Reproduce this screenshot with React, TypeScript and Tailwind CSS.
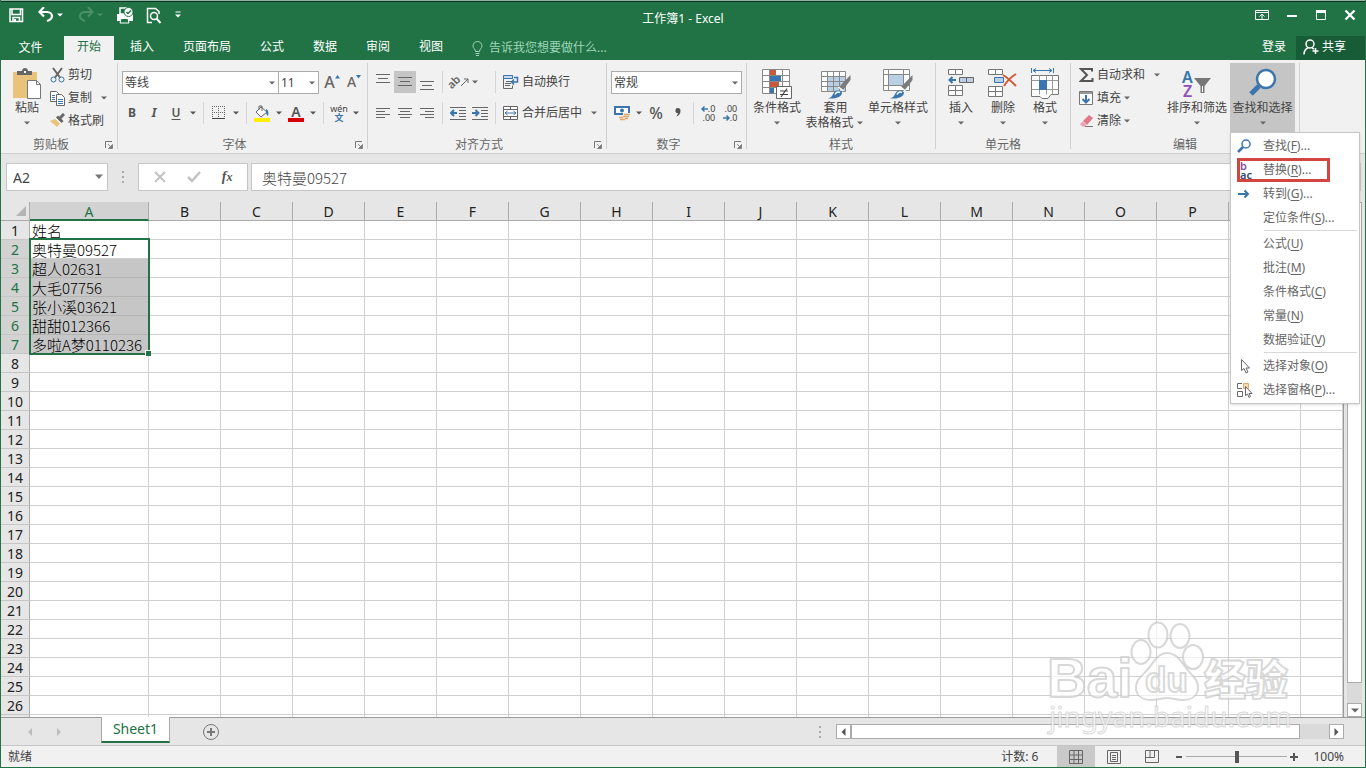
import type { ReactNode } from "react";
import clsx from "clsx";

const tabs = ["开始", "插入", "页面布局", "公式", "数据", "审阅", "视图"];
const columns = ["A", "B", "C", "D", "E", "F", "G", "H", "I", "J", "K", "L", "M", "N", "O", "P", "Q", "R"];
const names = ["姓名", "奥特曼09527", "超人02631", "大毛07756", "张小溪03621", "甜甜012366", "多啦A梦0110236"];
const rows = Array.from({ length: 26 }, (_, i) => i + 1);

const Caret = ({ className }: { className?: string }) => (
  <svg className={clsx("shrink-0", className)} width="12" height="6" viewBox="0 0 12 6">
    <path d="M3 1.500h6L6 4.500z" fill="currentColor" />
  </svg>
);

const Svg = ({ w = 16, h = 16, children }: { w?: number; h?: number; children: ReactNode }) => (
  <svg className="shrink-0" width={w} height={h} viewBox={`0 0 ${w} ${h}`} fill="none">
    {children}
  </svg>
);

const Sep = ({ className }: { className?: string }) => (
  <div className={clsx("h-[22px] w-px shrink-0 bg-[#d5d5d5]", className)} />
);

const Tool = ({ label, active, children }: { label: string; active?: boolean; children: ReactNode }) => (
  <button
    aria-label={label}
    className={clsx("flex h-[22px] w-[22px] shrink-0 items-center justify-center", active && "bg-[#c5c5c5]")}
  >
    {children}
  </button>
);

const Select = ({ label, value, className }: { label: string; value: string; className: string }) => (
  <div className={clsx("relative shrink-0", className)}>
    <select
      aria-label={label}
      className="h-[23px] w-full appearance-none border border-[#ababab] bg-white pl-[2px] text-xs leading-4 text-[#444]"
    >
      <option>{value}</option>
    </select>
    <Caret className="pointer-events-none absolute right-px top-[9px] text-[#666]" />
  </div>
);

const Group = ({
  label,
  className,
  launcher,
  children,
}: {
  label: string;
  className: string;
  launcher?: boolean;
  children: ReactNode;
}) => (
  <section className={clsx("relative shrink-0 border-r border-[#d0d0d0]", className)}>
    <div className="flex h-[73px]">{children}</div>
    <h2 className={clsx("pt-px text-center leading-4 text-[#666]", launcher && "pr-4")}>{label}</h2>
    {launcher && (
      <button aria-label={`${label}设置`} className="absolute bottom-0 right-1">
        <Svg w={8} h={8}>
          <path d="M.5 7V.5H7" stroke="#777" />
          <path d="M3 3l3 3M7.500 3.500v4h-4z" stroke="#777" fill="#777" strokeWidth=".8" />
        </Svg>
      </button>
    )}
  </section>
);

const Big = ({
  icon,
  label,
  second,
  className,
}: {
  icon: ReactNode;
  label: string;
  second?: string;
  className: string;
}) => (
  <button className={clsx("flex h-[69px] shrink-0 flex-col items-center pt-1", className)}>
    <span className="flex h-[33px] items-center">{icon}</span>
    <span className="whitespace-nowrap leading-4">{label}</span>
    <span className="flex h-3.5 items-center whitespace-nowrap leading-[14px]">
      {second}
      <Caret className="text-[#666]" />
    </span>
  </button>
);

const Small = ({ icon, label, caret }: { icon: ReactNode; label: string; caret?: string }) => (
  <button className="flex h-[23px] items-center gap-[3px] whitespace-nowrap">
    {icon}
    <span>{label}</span>
    {caret && <Caret className={clsx("text-[#666]", caret)} />}
  </button>
);

const Lines = ({ d }: { d: string }) => (
  <Svg w={14} h={16}>
    <path d={d} stroke="#666" />
  </Svg>
);

const Indent = ({ right }: { right?: boolean }) => (
  <Svg>
    <path d="M0 2.500h16M9 5.500h7M9 8.500h7M9 11.500h7M0 14.500h16" stroke="#666" />
    <path
      d={right ? "M0 8h6M3.500 5l3 3-3 3" : "M7 8H1.500M4 5L1 8l3 3"}
      stroke="#3a75ae"
      strokeWidth="2"
    />
  </Svg>
);

const Brush = () => (
  <>
    <path d="M29.500 7v5L22 22l-4-3z" fill="#7b7b7b" />
    <path d="M17.500 19l5 4" stroke="#fff" strokeWidth="1.500" />
    <path d="M7 30.500c4-1 4-3 6-6 2-3 7-2 8 0 0 4-5 6.500-14 6z" fill="#3a75ae" />
    <path d="M14 26.500c1-2.500 3-3 5-2" stroke="#fff" strokeWidth="1.500" />
  </>
);

const TitleBar = () => (
  <header className="bg-[#217346] text-white">
    <div className="h-px bg-[#8fb5a2]" />
    <div className="h-px bg-[#0e3320]" />
    <div className="relative flex h-[34px] items-center justify-between pb-2">
      <div className="flex items-center pl-[7px]">
        <button aria-label="保存" className="mr-3.5">
          <Svg>
            <path d="M2 2h12.500v12.500H2z" stroke="#fff" strokeWidth="1.500" />
            <path d="M4 2v5.500h8.500V2M5 14.500v-4h6.500v4" stroke="#fff" strokeWidth="1.500" />
            <path d="M6 12h2v3H6z" fill="#fff" />
          </Svg>
        </button>
        <button aria-label="撤消" className="flex items-center">
          <Svg>
            <path d="M2 5h7c3 0 5 2 5 4s-2 4-5 5" stroke="#fff" strokeWidth="2.200" />
            <path d="M6 0L1.500 5 6 9.500" stroke="#fff" strokeWidth="2.200" />
          </Svg>
          <Caret />
        </button>
        <button aria-label="恢复" className="ml-3 flex items-center text-[#4b9069]">
          <Svg>
            <path d="M14 5H7C4 5 2 7 2 9s2 4 5 5" stroke="currentColor" strokeWidth="2" />
            <path d="M10 0l4.500 5-4.500 4.500" stroke="currentColor" strokeWidth="2" />
          </Svg>
          <Caret />
        </button>
        <button aria-label="快速打印" className="ml-2.5">
          <Svg w={18} h={17}>
            <path d="M1 7h16v7H1z" fill="#fff" />
            <path d="M4 1h7v6H4z" fill="#217346" stroke="#fff" strokeWidth="1.500" />
            <path d="M5 11.500h7l1 4.500H4z" fill="#217346" stroke="#fff" />
            <circle cx="12.500" cy="5" r="4.500" fill="#fff" stroke="#217346" />
            <path d="M10.500 5l1.500 1.500L15 3.500" stroke="#217346" strokeWidth="1.500" />
          </Svg>
        </button>
        <button aria-label="打印预览" className="ml-3">
          <Svg w={16} h={17}>
            <path d="M6 15.500H1.500v-14h8l3.500 3V7" stroke="#fff" strokeWidth="1.500" />
            <circle cx="8" cy="9" r="3.500" stroke="#fff" strokeWidth="1.500" />
            <path d="M10.500 11.500l4 4.500" stroke="#fff" strokeWidth="2" />
          </Svg>
        </button>
        <button aria-label="自定义快速访问工具栏" className="ml-3">
          <Svg w={8} h={8}>
            <path d="M1.500 1h5" stroke="#fff" />
            <path d="M1 3.500h6l-3 3z" fill="#fff" />
          </Svg>
        </button>
      </div>
      <h1 className="pointer-events-none absolute inset-x-0 top-[9px] text-center leading-4">工作簿1 - Excel</h1>
      <div className="flex items-center gap-[17px] pr-[9px]">
        <button aria-label="功能区显示选项">
          <Svg w={14} h={12}>
            <path d="M.5 1.500h13v9H.5zM.5 3.500h13M7 10V5M4.500 7.500L7 5l2.500 2.500" stroke="#fff" />
          </Svg>
        </button>
        <button aria-label="最小化">
          <Svg w={12} h={12}>
            <path d="M1 7h10" stroke="#fff" strokeWidth="2" />
          </Svg>
        </button>
        <button aria-label="最大化">
          <Svg w={12} h={12}>
            <path d="M1.500 1.500h9v9h-9z" stroke="#fff" />
            <path d="M1 1h10v3H1z" fill="#fff" />
          </Svg>
        </button>
        <button aria-label="关闭">
          <Svg w={12} h={12}>
            <path d="M1.500 1.500l9 9M10.500 1.500l-9 9" stroke="#fff" strokeWidth="2.200" />
          </Svg>
        </button>
      </div>
    </div>
    <nav className="flex h-6 items-stretch">
      <button className="w-[63px] pr-1">文件</button>
      <div className="flex gap-[3px]">
        {tabs.map((tab, i) => (
          <button key={tab} className={clsx("px-[13px] pb-0.5", i === 0 && "bg-[#f1f1f1] text-[#217346]")}>
            {tab}
          </button>
        ))}
      </div>
      <label className="ml-4 flex flex-1 items-center gap-1.5 text-[#9fd5b7]">
        <Svg w={11} h={15}>
          <path
            d="M3.500 10.500C3.500 8 1 7.500 1 5a4.500 4.500 0 019 0c0 2.500-2.500 3-2.500 5.500zM3.500 12.500h4M4 14.500h3"
            stroke="#9fd5b7"
          />
        </Svg>
        <input
          aria-label="操作说明搜索"
          placeholder="告诉我您想要做什么..."
          className="w-40 bg-transparent leading-4 placeholder:text-[#9fd5b7]"
        />
      </label>
      <button className="mr-2.5 pb-0.5">登录</button>
      <button className="flex w-[69px] items-center gap-[3px] bg-[#185c37] pb-0.5 pl-[7px]">
        <Svg>
          <circle cx="7" cy="5" r="4" stroke="#fff" strokeWidth="1.500" />
          <path d="M1 15.500c0-4 2-6 4.500-7M9 9l2 1M12.500 9v6M9.500 12h6" stroke="#fff" strokeWidth="1.500" />
        </Svg>
        共享
      </button>
    </nav>
  </header>
);

const Clipboard = () => (
  <Group label="剪贴板" className="w-[117px]" launcher>
    <Big
      className="ml-1.5 w-10"
      label="粘贴"
      icon={
        <Svg w={28} h={32}>
          <path d="M0 4h24v26H0z" fill="#e9c27c" />
          <path d="M4 7V3h5c0-4 6-4 6 0h4v4z" fill="#666" />
          <path d="M11 3h2v2h-2z" fill="#fff" />
          <path d="M14.500 12.500h9l4 4v14h-13z" fill="#fff" stroke="#777" />
          <path d="M23.500 12.500v4h4" stroke="#777" />
        </Svg>
      }
    />
    <div className="ml-[3px]">
      <Small
        label="剪切"
        icon={
          <Svg w={15}>
            <path d="M3 1l7 9.500M12 1L5 10.500" stroke="#666" strokeWidth="2" />
            <circle cx="3.500" cy="12.500" r="2.500" stroke="#3a75ae" />
            <circle cx="11.500" cy="12.500" r="2.500" stroke="#3a75ae" />
          </Svg>
        }
      />
      <Small
        label="复制"
        caret="ml-[3px]"
        icon={
          <Svg w={15}>
            <path d="M.5 1.500h6l2 2v8h-8z" fill="#fff" stroke="#666" />
            <path d="M6.500 4.500h5l3 3v8h-8z" fill="#fff" stroke="#666" />
            <path d="M2 5.500h3M2 7.500h3M2 9.500h3M8 9.500h5M8 11.500h5M8 13.500h5" stroke="#3a75ae" />
          </Svg>
        }
      />
      <Small
        label="格式刷"
        icon={
          <Svg w={15}>
            <path d="M14 1l-4 4M7 3.500l5.500 5.500" stroke="#666" strokeWidth="3" />
            <path d="M0 8l5-2 5 4.500L7 14z" fill="#e9c27c" />
            <path d="M5.500 5l5 5" stroke="#fff" />
          </Svg>
        }
      />
    </div>
  </Group>
);

const FontGroup = () => (
  <Group label="字体" className="w-[250px]" launcher>
    <div className="flex flex-col gap-[9px] pt-2">
      <div className="flex h-[22px] pl-1">
        <Select label="字体" value="等线" className="w-[157px]" />
        <Select label="字号" value="11" className="-ml-px mr-0.5 w-[41px]" />
        <Tool label="增大字号">
          <span className="text-base leading-5 font-medium text-[#666]">A</span>
          <Svg w={5} h={14}>
            <path d="M0 3.500L2.500 0 5 3.500z" fill="#3a75ae" />
          </Svg>
        </Tool>
        <Tool label="减小字号">
          <span className="text-sm leading-5 font-medium text-[#666]">A</span>
          <Svg w={5} h={14}>
            <path d="M0 0h5L2.500 3.500z" fill="#3a75ae" />
          </Svg>
        </Tool>
      </div>
      <div className="flex h-[22px] items-center pl-[3px] text-[#555]">
        <Tool label="加粗">
          <b>B</b>
        </Tool>
        <Tool label="倾斜">
          <i className="font-bold">I</i>
        </Tool>
        <Tool label="下划线">
          <u className="font-semibold underline-offset-2">U</u>
        </Tool>
        <Caret />
        <Sep className="mx-1" />
        <Tool label="边框">
          <Svg w={14} h={14}>
            <path d="M.5 0v12M6.500 0v12M12.500 0v12M0 .5h13M0 6.500h13" stroke="#666" strokeDasharray="1 1" />
            <path d="M0 12.500h13" stroke="#444" />
          </Svg>
        </Tool>
        <Caret />
        <Sep className="mx-1" />
        <Tool label="填充颜色">
          <Svg h={17}>
            <path d="M2 7l5-5 6 5-6 5z" fill="#fff" stroke="#666" />
            <path d="M5 5V1h3v5" stroke="#666" />
            <path d="M12 4c2 1 3 3 2 7-1-1-2-2-2-4z" fill="#3a75ae" />
            <path d="M0 13h16v4H0z" fill="#ffee00" />
          </Svg>
        </Tool>
        <Caret />
        <Tool label="字体颜色">
          <span className="flex flex-col items-center">
            <span className="text-sm leading-[13px] font-semibold">A</span>
            <span className="h-1 w-4 bg-[#d60000]" />
          </span>
        </Tool>
        <Caret />
        <Sep className="mx-1" />
        <Tool label="拼音">
          <span className="flex flex-col items-center">
            <span className="text-[9px] leading-[9px] text-[#444]">wén</span>
            <span className="text-[9px] leading-[9px] font-bold text-[#3a75ae]">文</span>
          </span>
        </Tool>
        <Caret />
      </div>
    </div>
  </Group>
);

const AlignGroup = () => (
  <Group label="对齐方式" className="w-[239px]" launcher>
    <div className="flex flex-col gap-[9px] pt-2">
      <div className="flex h-[22px] items-center pl-1">
        <Tool label="顶端对齐">
          <Lines d="M0 .5h14M2 4.500h10M0 8.500h14" />
        </Tool>
        <Tool label="垂直居中" active>
          <Lines d="M0 3.500h14M2 7.500h10M0 11.500h14" />
        </Tool>
        <Tool label="底端对齐">
          <Lines d="M0 7.500h14M2 11.500h10M0 15.500h14" />
        </Tool>
        <Sep className="mx-1" />
        <Tool label="方向">
          <span className="-rotate-45 text-[11px] leading-3 font-semibold text-[#666]">ab</span>
          <Svg w={8} h={16}>
            <path d="M-2 14L7 5M3 5h4v4" stroke="#666" />
          </Svg>
        </Tool>
        <Caret className="mr-3.5 text-[#666]" />
        <Sep className="mr-[7px]" />
        <Small
          label="自动换行"
          icon={
            <Svg>
              <path d="M.5 1.500h9v3h-9zM.5 4.500v10h9v-3M2 9.500h6M2 11.500h5M3 7.500h8" stroke="#666" />
              <path d="M.5 1.500h9v3h-9z" fill="#c9dbec" stroke="#3a75ae" />
              <path d="M11 3.500h3.500V8H9M11 5.500L8.500 8l2.500 2.500" stroke="#3a75ae" strokeWidth="1.500" />
            </Svg>
          }
        />
      </div>
      <div className="flex h-[22px] items-center pl-1">
        <Tool label="左对齐">
          <Lines d="M0 3.500h14M0 6.500h9M0 9.500h14M0 12.500h9" />
        </Tool>
        <Tool label="居中">
          <Lines d="M0 3.500h14M2 6.500h10M0 9.500h14M2 12.500h10" />
        </Tool>
        <Tool label="右对齐">
          <Lines d="M0 3.500h14M5 6.500h9M0 9.500h14M5 12.500h9" />
        </Tool>
        <Sep className="mx-1" />
        <Tool label="减少缩进量">
          <Indent />
        </Tool>
        <Tool label="增加缩进量">
          <Indent right />
        </Tool>
        <Sep className="ml-1 mr-[7px]" />
        <Small
          label="合并后居中"
          caret="ml-[3px]"
          icon={
            <Svg>
              <path
                d="M.5 1.500h14v13H.5zM.5 4.500h14M.5 11.500h14M7.500 1.500v3M7.500 11.500v3"
                fill="#fff"
                stroke="#666"
              />
              <path d="M2 8h11M4.500 6L2 8l2.500 2M10.500 6L13 8l-2.500 2" stroke="#3a75ae" />
            </Svg>
          }
        />
      </div>
    </div>
  </Group>
);

const NumberGroup = () => (
  <Group label="数字" className="w-[140px]" launcher>
    <div className="flex flex-col gap-[9px] pl-1 pt-2">
      <div className="h-[22px]">
        <Select label="数字格式" value="常规" className="w-[131px]" />
      </div>
      <div className="flex h-[22px] items-center text-[#555]">
        <Tool label="会计数字格式">
          <Svg w={17}>
            <path d="M1 2h14v7H1z" fill="#fff" stroke="#3a75ae" strokeWidth="2" />
            <circle cx="8" cy="5.500" r="2" fill="#3a75ae" />
            <path d="M9 8h7v7H5v-3h4z" fill="#f1f1f1" />
            <path d="M10 9.500h6M9 11.500h6M5 12.500h4M6 14.500h5M11 13.500h3" stroke="#e2a868" strokeWidth="1.500" />
          </Svg>
        </Tool>
        <Caret />
        <Tool label="百分比样式">
          <span className="text-base leading-5 font-medium">%</span>
        </Tool>
        <Tool label="千位分隔样式">
          <Svg w={6} h={12}>
            <path
              d="M3 1a2.500 2.500 0 012.500 2.500C5.500 7 4 8.500 1 9.500c1.500-1.500 2-2.500 1.800-3.500A2.500 2.500 0 013 1z"
              fill="#555"
            />
          </Svg>
        </Tool>
        <Sep className="ml-1 mr-[3px]" />
        <Tool label="增加小数位数">
          <span className="flex flex-col items-end text-[9px] leading-[9px] text-[#444]">
            <span className="flex items-center">
              <Svg w={7} h={8}>
                <path d="M.5 4H7M3.500 1.500L1 4l2.500 2.500" stroke="#3a75ae" strokeWidth="1.500" />
              </Svg>
              .0
            </span>
            <span>.00</span>
          </span>
        </Tool>
        <Tool label="减少小数位数">
          <span className="flex flex-col items-end text-[9px] leading-[9px] text-[#444]">
            <span>.00</span>
            <span className="flex items-center">
              <Svg w={7} h={8}>
                <path d="M0 4h6M3.500 1.500L6 4 3.500 6.500" stroke="#3a75ae" strokeWidth="1.500" />
              </Svg>
              .0
            </span>
          </span>
        </Tool>
      </div>
    </div>
  </Group>
);

const StyleGroup = () => (
  <Group label="样式" className="w-[189px]">
    <Big
      className="ml-0.5 w-14"
      label="条件格式"
      icon={
        <Svg w={31} h={32}>
          <path d="M.5 1.500h27v24H.5z" fill="#fff" />
          <path d="M8 2h6v5H8zM8 14h9v5H8z" fill="#c9583c" />
          <path d="M8 8h11v5H8zM8 20h4v5H8z" fill="#3a75ae" />
          <path
            d="M.5 1.500h27v24H.5zM.5 7.500h27M.5 13.500h27M.5 19.500h27M7.500 1.500v24M20.500 1.500v24"
            stroke="#888"
          />
          <path d="M14.500 18.500h15v12h-15z" fill="#fff" stroke="#666" />
          <path d="M18 23h8M18 26.500h8M25 20.500l-6 8.500" stroke="#444" strokeWidth="1.200" />
        </Svg>
      }
    />
    <Big
      className="w-[61px]"
      label="套用"
      second="表格格式"
      icon={
        <Svg w={30} h={32}>
          <path d="M.5 3.500h24v20H.5z" fill="#fff" />
          <path d="M7 9h18v15H7z" fill="#b8cfe6" />
          <path
            d="M.5 3.500h24v20H.5zM.5 8.500h24M.5 13.500h24M.5 18.500h24M6.500 3.500v20M12.500 3.500v20M18.500 3.500v20"
            stroke="#888"
          />
          <Brush />
        </Svg>
      }
    />
    <Big
      className="w-16"
      label="单元格样式"
      icon={
        <Svg w={30} h={32}>
          <path d="M.5 1.500h26v21H.5z" fill="#fff" />
          <path d="M6 7h14v10H6z" fill="#b8cfe6" />
          <path d="M.5 1.500h26v21H.5zM.5 6.500h26M.5 17.500h26M5.500 1.500v21M20.500 1.500v21" stroke="#888" />
          <Brush />
        </Svg>
      }
    />
  </Group>
);

const CellGroup = () => (
  <Group label="单元格" className="w-[135px]">
    <Big
      className="ml-1 w-[42px]"
      label="插入"
      icon={
        <Svg w={27} h={32}>
          <path
            d="M.5 1.500h14v5H.5zM7.500 1.500v5M.5 17.500h14v10H.5zM7.500 17.500v10M.5 22.500h14"
            fill="#fff"
            stroke="#777"
          />
          <path d="M11.500 9.500h14v5h-14zM18.500 9.500v5" fill="#b8cfe6" stroke="#666" />
          <path d="M1 12h7M4.500 9L1.500 12l3 3" stroke="#3a75ae" strokeWidth="2" />
        </Svg>
      }
    />
    <Big
      className="w-[42px]"
      label="删除"
      icon={
        <Svg w={30} h={32}>
          <path
            d="M.5 1.500h14v5H.5zM7.500 1.500v5M.5 18.500h14v10H.5zM7.500 18.500v10M.5 23.500h14"
            fill="#fff"
            stroke="#777"
          />
          <path d="M6.500 9.500h9v5h-9z" fill="#b8cfe6" stroke="#3a75ae" />
          <path d="M15 7c5 3 9 7 13 11M28 6c-5 3-9 7-12 12" stroke="#cf5b38" strokeWidth="2" />
        </Svg>
      }
    />
    <Big
      className="w-[42px]"
      label="格式"
      icon={
        <Svg w={28} h={32}>
          <path d="M.5 0v5M22.500 0v5M2 2.500h19M5 .5l-3 2 3 2M18 .5l3 2-3 2" stroke="#3a75ae" />
          <path d="M.5 7.500h27v19H20l-3 4h-6l-2-2H.5z" fill="#fff" stroke="#777" />
          <path d="M.5 12.500h27M.5 21.500h27M8.500 7.500v19M15.500 7.500v19M21.500 7.500v19" stroke="#999" />
          <path d="M8 12h8v10H8z" fill="#3a75ae" />
        </Svg>
      }
    />
  </Group>
);

const menuItems = [
  { text: "查找", key: "F", more: true, icon: "find" },
  { text: "替换", key: "R", more: true, icon: "replace" },
  { text: "转到", key: "G", more: true, icon: "goto" },
  { text: "定位条件", key: "S", more: true },
  { text: "公式", key: "U", divider: true },
  { text: "批注", key: "M" },
  { text: "条件格式", key: "C" },
  { text: "常量", key: "N" },
  { text: "数据验证", key: "V" },
  { text: "选择对象", key: "O", divider: true, icon: "pointer" },
  { text: "选择窗格", key: "P", more: true, icon: "pane" },
];

const menuIcons: Record<string, ReactNode> = {
  find: (
    <Svg>
      <circle cx="10" cy="6" r="4" stroke="#3a75ae" strokeWidth="1.500" />
      <path d="M7 9l-5 5" stroke="#3a75ae" strokeWidth="2.500" />
    </Svg>
  ),
  replace: (
    <span className="flex flex-col items-start pl-1 text-[11px] leading-[9px] font-semibold">
      <span className="text-[#8150a5]">b</span>
      <span className="text-[#2d4a78]">ac</span>
    </span>
  ),
  goto: (
    <Svg>
      <path d="M2 8h10M8.500 4.500L12 8l-3.500 3.500" stroke="#3a75ae" strokeWidth="2" />
    </Svg>
  ),
  pointer: (
    <Svg>
      <path d="M5.500 1.500v11l2.500-2 2 4.500 2-1-2-4h3.500z" fill="#fff" stroke="#666" />
    </Svg>
  ),
  pane: (
    <Svg w={17}>
      <path d="M6 1.500H1.500v5H6M1.500 9.500h5v5h-5z" stroke="#666" />
      <path d="M7.500 1.500h5v5h-5z" fill="#f3d9ae" stroke="#e2a868" />
      <path d="M9.500 4.500v9l2-1.500 1.500 3.500 1.500-1-1.500-3h3z" fill="#fff" stroke="#666" />
    </Svg>
  ),
};

const FindMenu = () => (
  <ul className="absolute left-0 top-[69px] z-20 w-[130px] border border-[#c6c6c6] bg-white pb-px pt-px text-[#666] shadow-sm">
    {menuItems.map((item) => (
      <li key={item.key} className="relative">
        {item.divider && <div className="mb-px ml-[33px] mr-0.5 h-px bg-[#d8d8d8]" />}
        <button className="flex h-6 w-full items-center gap-1.5 whitespace-nowrap">
          <span className="flex w-[26px] justify-center">{item.icon && menuIcons[item.icon]}</span>
          <span>
            {item.text}(<u className="underline-offset-2">{item.key}</u>){item.more && "..."}
          </span>
        </button>
        {item.key === "R" && (
          <div className="pointer-events-none absolute left-1.5 top-0 h-6 w-[93px] border-3 border-[#d3453f]" />
        )}
      </li>
    ))}
  </ul>
);

const EditGroup = () => (
  <Group label="编辑" className="w-[229px]">
    <div className="ml-2 w-[85px]">
      <Small
        label="自动求和"
        caret="ml-[3px]"
        icon={
          <Svg w={15}>
            <path d="M13 4.500V2H2l6 6-6 6h11.500v-3" stroke="#555" strokeWidth="2" />
          </Svg>
        }
      />
      <Small
        label="填充"
        caret="-ml-[3px]"
        icon={
          <Svg w={15}>
            <path d="M.5 1.500h13v13H.5z" fill="#fff" stroke="#777" />
            <path d="M1 2h12v2H1z" fill="#999" />
            <path d="M7 5v7M3.500 9L7 12.500 10.500 9" stroke="#3a75ae" strokeWidth="2" />
          </Svg>
        }
      />
      <Small
        label="清除"
        caret="-ml-[3px]"
        icon={
          <Svg w={15}>
            <path d="M4 8l6-6 4 3-6 7z" fill="#e0788c" />
            <path d="M3.500 8.500L7.500 12l-1.500 1.500H3L1 11z" fill="#e9a3b0" />
            <path d="M6 13.500h8" stroke="#777" />
          </Svg>
        }
      />
    </div>
    <Big
      className="w-[66px]"
      label="排序和筛选"
      icon={
        <span className="flex items-center">
          <span className="flex flex-col items-center text-base leading-[14px] font-semibold">
            <span className="text-[#3a75ae]">A</span>
            <span className="text-[#8f50b5]">Z</span>
          </span>
          <Svg w={19} h={24}>
            <path d="M1 6h17l-6.500 8v7h-4v-7z" fill="#777" />
            <path d="M9.500 14v6" stroke="#fff" />
          </Svg>
        </span>
      }
    />
    <div className="relative">
      <Big
        className="w-[65px] bg-[#c5c5c5]"
        label="查找和选择"
        icon={
          <Svg w={30} h={32}>
            <path d="M11 18l-8 8" stroke="#3a75ae" strokeWidth="5" />
            <circle cx="18" cy="11" r="9" fill="#fff" stroke="#3a75ae" strokeWidth="2.500" />
          </Svg>
        }
      />
      <FindMenu />
    </div>
  </Group>
);

const FormulaBar = () => (
  <div className="flex h-12 items-center pb-0.5 pl-[5px] pr-1 text-sm text-[#444]">
    <div className="relative w-[102px]">
      <input
        aria-label="名称框"
        defaultValue="A2"
        className="h-7 w-full border border-[#c6c6c6] bg-white pl-1.5 leading-5"
      />
      <svg className="absolute right-1 top-[11px]" width="10" height="6" viewBox="0 0 10 6">
        <path d="M1 .5h8l-4 4.500z" fill="#777" />
      </svg>
    </div>
    <div className="mx-[13px]">
      <Svg w={4} h={14}>
        <path d="M1 1h2v2H1zM1 6h2v2H1zM1 11h2v2H1z" fill="#aaa" />
      </Svg>
    </div>
    <div className="flex h-7 w-[110px] items-center justify-around border border-[#c6c6c6] bg-white px-1">
      <button aria-label="取消">
        <Svg w={12} h={12}>
          <path d="M1 1l10 10M11 1L1 11" stroke="#c2c2c2" strokeWidth="2" />
        </Svg>
      </button>
      <button aria-label="输入">
        <Svg w={14} h={12}>
          <path d="M1 6l4 4 8-9" stroke="#c2c2c2" strokeWidth="2.500" />
        </Svg>
      </button>
      <button
        aria-label="插入函数"
        className="font-['Liberation_Serif',serif] text-sm leading-5 font-bold text-[#555] italic"
      >
        f<span className="text-xs">x</span>
      </button>
    </div>
    <input
      aria-label="编辑栏"
      defaultValue="奥特曼09527"
      className="ml-[3px] h-7 min-w-0 flex-1 border border-[#c6c6c6] bg-white pl-2.5 font-['Noto_Sans_CJK_SC',sans-serif] text-[15px] leading-5 font-light"
    />
  </div>
);

const Sheet = () => (
  <div className="flex flex-1">
    <div className="min-w-0 flex-1 overflow-hidden border-r border-[#9b9b9b]">
      <table className="w-full table-fixed border-separate border-spacing-0 text-sm leading-4 text-[#222]">
        <thead>
          <tr className="h-[19px] bg-[#e6e6e6]">
            <th className="w-[29px] border-b border-r border-[#ababab] p-0" aria-label="全选">
              <svg className="ml-auto mr-0.5" width="12" height="12" viewBox="0 0 12 12">
                <path d="M11 1v10H1z" fill="#b4b4b4" />
              </svg>
            </th>
            {columns.map((c, i) => (
              <th
                key={c}
                aria-label={c}
                className={clsx(
                  "border-r border-r-[#ababab] p-0 pt-0.5 font-normal",
                  i === 0 && "w-[119px] border-b-2 border-b-[#217346] bg-[#d2d2d2] leading-[15px] text-[#217346]",
                  i > 0 && "border-b border-b-[#ababab]",
                  i > 0 && i < 17 && "w-[72px]"
                )}
              >
                {i < 16 && c}
              </th>
            ))}
          </tr>
        </thead>
        <tbody>
          {rows.map((r) => (
            <tr key={r} className="h-[19px]">
              <th
                className={clsx(
                  "border-b border-r border-b-[#c6c6c6] p-0 pt-0.5 font-normal",
                  r > 1 && r < 8
                    ? "border-r-[#217346] bg-[#d2d2d2] text-[#217346]"
                    : "border-r-[#ababab] bg-[#e6e6e6]"
                )}
              >
                {r}
              </th>
              {columns.map((c, i) => (
                <td
                  key={c}
                  className={clsx(
                    "border-b border-r p-0",
                    i === 0 &&
                      "relative pl-[2px] pt-0.5 font-['Noto_Sans_CJK_SC',sans-serif] text-[15px] leading-4 font-light whitespace-nowrap text-black",
                    i === 0 && r > 2 && r < 8 ? "border-[#b4b4b4] bg-[#c6c6c6]" : "border-[#d0d0d0] bg-white"
                  )}
                >
                  {i === 0 && names[r - 1]}
                  {i === 0 && r === 2 && (
                    <div className="pointer-events-none absolute -left-px -top-0.5 z-10 h-[117px] w-[121px] border-2 border-[#217346]">
                      <div className="absolute -bottom-[3px] -right-[3px] h-1.5 w-1.5 border-l border-t border-white bg-[#217346]" />
                    </div>
                  )}
                </td>
              ))}
            </tr>
          ))}
          <tr className="h-0.5">
            <th className="border-r border-[#ababab] p-0" />
            {columns.map((c) => (
              <td key={c} className="border-r border-[#d0d0d0] bg-white p-0" />
            ))}
          </tr>
        </tbody>
      </table>
    </div>
    <div className="flex w-[21px] flex-col px-[3px]">
      <div className="flex-1 border border-[#ababab] bg-white" />
      <div className="h-5 bg-[#dadada]" />
      <button
        aria-label="向下滚动"
        className="flex h-[14px] items-center justify-center border border-[#ababab] bg-white"
      >
        <svg width="8" height="5" viewBox="0 0 8 5">
          <path d="M0 .5h8L4 4.500z" fill="#666" />
        </svg>
      </button>
    </div>
  </div>
);

const SheetTabs = () => (
  <div className="flex h-7 border-t border-[#9b9b9b] text-[#bcbcbc]">
    <button aria-label="上一个工作表" className="ml-[25px]">
      <svg width="8" height="8" viewBox="0 0 8 8">
        <path d="M6 0v8L2 4z" fill="currentColor" />
      </svg>
    </button>
    <button aria-label="下一个工作表" className="ml-[21px]">
      <svg width="8" height="8" viewBox="0 0 8 8">
        <path d="M2 0v8l4-4z" fill="currentColor" />
      </svg>
    </button>
    <button className="-mt-px ml-[38px] h-[26px] w-[69px] border-x border-b-2 border-x-[#ababab] border-b-[#217346] bg-white text-sm leading-5 text-[#217346]">
      Sheet1
    </button>
    <button aria-label="新工作表" className="ml-8">
      <Svg w={18} h={18}>
        <circle cx="9" cy="9" r="7.500" stroke="#777" />
        <path d="M9 5v8M5 9h8" stroke="#777" strokeWidth="2" />
      </Svg>
    </button>
    <div className="ml-auto flex items-center pr-[21px]">
      <Svg w={4} h={12}>
        <path d="M1 0h2v2H1zM1 5h2v2H1zM1 10h2v2H1z" fill="#aaa" />
      </Svg>
      <button
        aria-label="向左滚动"
        className="ml-3.5 flex h-[15px] w-[15px] items-center justify-center border border-[#ababab] bg-white"
      >
        <svg width="5" height="8" viewBox="0 0 5 8">
          <path d="M4.500 0v8L.5 4z" fill="#555" />
        </svg>
      </button>
      <div className="h-[15px] w-[449px] border border-[#ababab] bg-white" />
      <div className="h-[15px] w-[29px] bg-[#dadada]" />
      <button
        aria-label="向右滚动"
        className="flex h-[15px] w-[15px] items-center justify-center border border-[#ababab] bg-white"
      >
        <svg width="5" height="8" viewBox="0 0 5 8">
          <path d="M.5 0v8l4-4z" fill="#555" />
        </svg>
      </button>
    </div>
  </div>
);

const StatusBar = () => (
  <footer className="flex h-[22px] items-center border-t border-[#c6c6c6] bg-[#f1f1f1] pl-[7px] pr-[21px] text-[#444]">
    <span>就绪</span>
    <span className="ml-auto mr-[19px]">计数: 6</span>
    <button aria-label="普通" className="flex h-full w-[38px] items-center justify-center bg-[#c9c9c9]">
      <Svg w={14} h={14}>
        <path d="M.5.5h13v13H.5zM.5 5h13M.5 9.500h13M5 .5v13M9.500.5v13" stroke="#666" />
      </Svg>
    </button>
    <button aria-label="页面布局视图" className="flex w-[38px] justify-center">
      <Svg w={14} h={14}>
        <path d="M.5.5h13v13H.5zM3.500 2.500h7v9h-7zM5 5.500h4M5 7.500h4M5 9.500h4" stroke="#666" />
      </Svg>
    </button>
    <button aria-label="分页预览" className="flex w-[38px] justify-center">
      <Svg w={14} h={14}>
        <path d="M.5.5h13v12H.5zM.5 7.500h9v-7M5 .5v7" stroke="#666" />
      </Svg>
    </button>
    <button aria-label="缩小" className="ml-1">
      <Svg w={8} h={8}>
        <path d="M1 4h6" stroke="#555" strokeWidth="2" />
      </Svg>
    </button>
    <input
      type="range"
      aria-label="显示比例"
      defaultValue={50}
      className="mx-[3px] h-3 w-[101px] appearance-none bg-[linear-gradient(#aaa,#aaa)] bg-[length:100%_1px] bg-center bg-no-repeat [&::-webkit-slider-thumb]:h-3 [&::-webkit-slider-thumb]:w-1 [&::-webkit-slider-thumb]:appearance-none [&::-webkit-slider-thumb]:bg-[#555]"
    />
    <button aria-label="放大">
      <Svg w={8} h={8}>
        <path d="M0 4h8M4 0v8" stroke="#555" strokeWidth="2" />
      </Svg>
    </button>
    <span className="ml-[15px]">100%</span>
  </footer>
);

const Watermark = () => (
  <svg
    className="pointer-events-none absolute bottom-[29px] right-[69px] z-10"
    width="250"
    height="120"
    viewBox="0 0 250 120"
    fill="#ffffff"
    fillOpacity="0.65"
    stroke="#c8c8c8"
    strokeOpacity="0.7"
    strokeWidth="2"
    strokeLinejoin="round"
  >
    <text x="1" y="79" fontSize="55" fontWeight="700" fontFamily="Liberation Sans">
      Bai
    </text>
    <ellipse cx="95" cy="34" rx="9.500" ry="12" />
    <ellipse cx="112" cy="17" rx="9.500" ry="12.500" />
    <ellipse cx="134" cy="18" rx="9.500" ry="12" />
    <ellipse cx="147" cy="39" rx="10" ry="12" />
    <path d="M121 35c9 0 14 8 19 15 6 8 13 12 12 21-1 8-8 11-15 11-6 0-11-2-16-2s-10 2-16 2c-7 0-14-3-15-11-1-9 6-13 13-21 5-7 10-15 18-15z" />
    <text x="99" y="74" fontSize="35" fontWeight="700" fontFamily="Liberation Sans">
      du
    </text>
    <text x="158" y="77" fontSize="42" fontWeight="900" fontFamily="Noto Sans CJK SC">
      经验
    </text>
    <text x="3" y="109" fontSize="28" fontFamily="Noto Sans" strokeWidth="1">
      jingyan.baidu.com
    </text>
  </svg>
);

const App = () => {
  return (
    <div className="relative flex min-h-screen flex-col overflow-hidden border-x border-b border-[#217346] bg-[#e6e6e6] font-['Noto_Sans','Noto_Sans_CJK_SC',sans-serif] text-xs leading-4 text-[#444]">
      <TitleBar />
      <div className="flex h-[94px] border-b border-[#d0d0d0] bg-[#f1f1f1] pb-1 pt-[3px]">
        <Clipboard />
        <FontGroup />
        <AlignGroup />
        <NumberGroup />
        <StyleGroup />
        <CellGroup />
        <EditGroup />
      </div>
      <FormulaBar />
      <Sheet />
      <SheetTabs />
      <StatusBar />
      <Watermark />
    </div>
  );
};

export default App;
